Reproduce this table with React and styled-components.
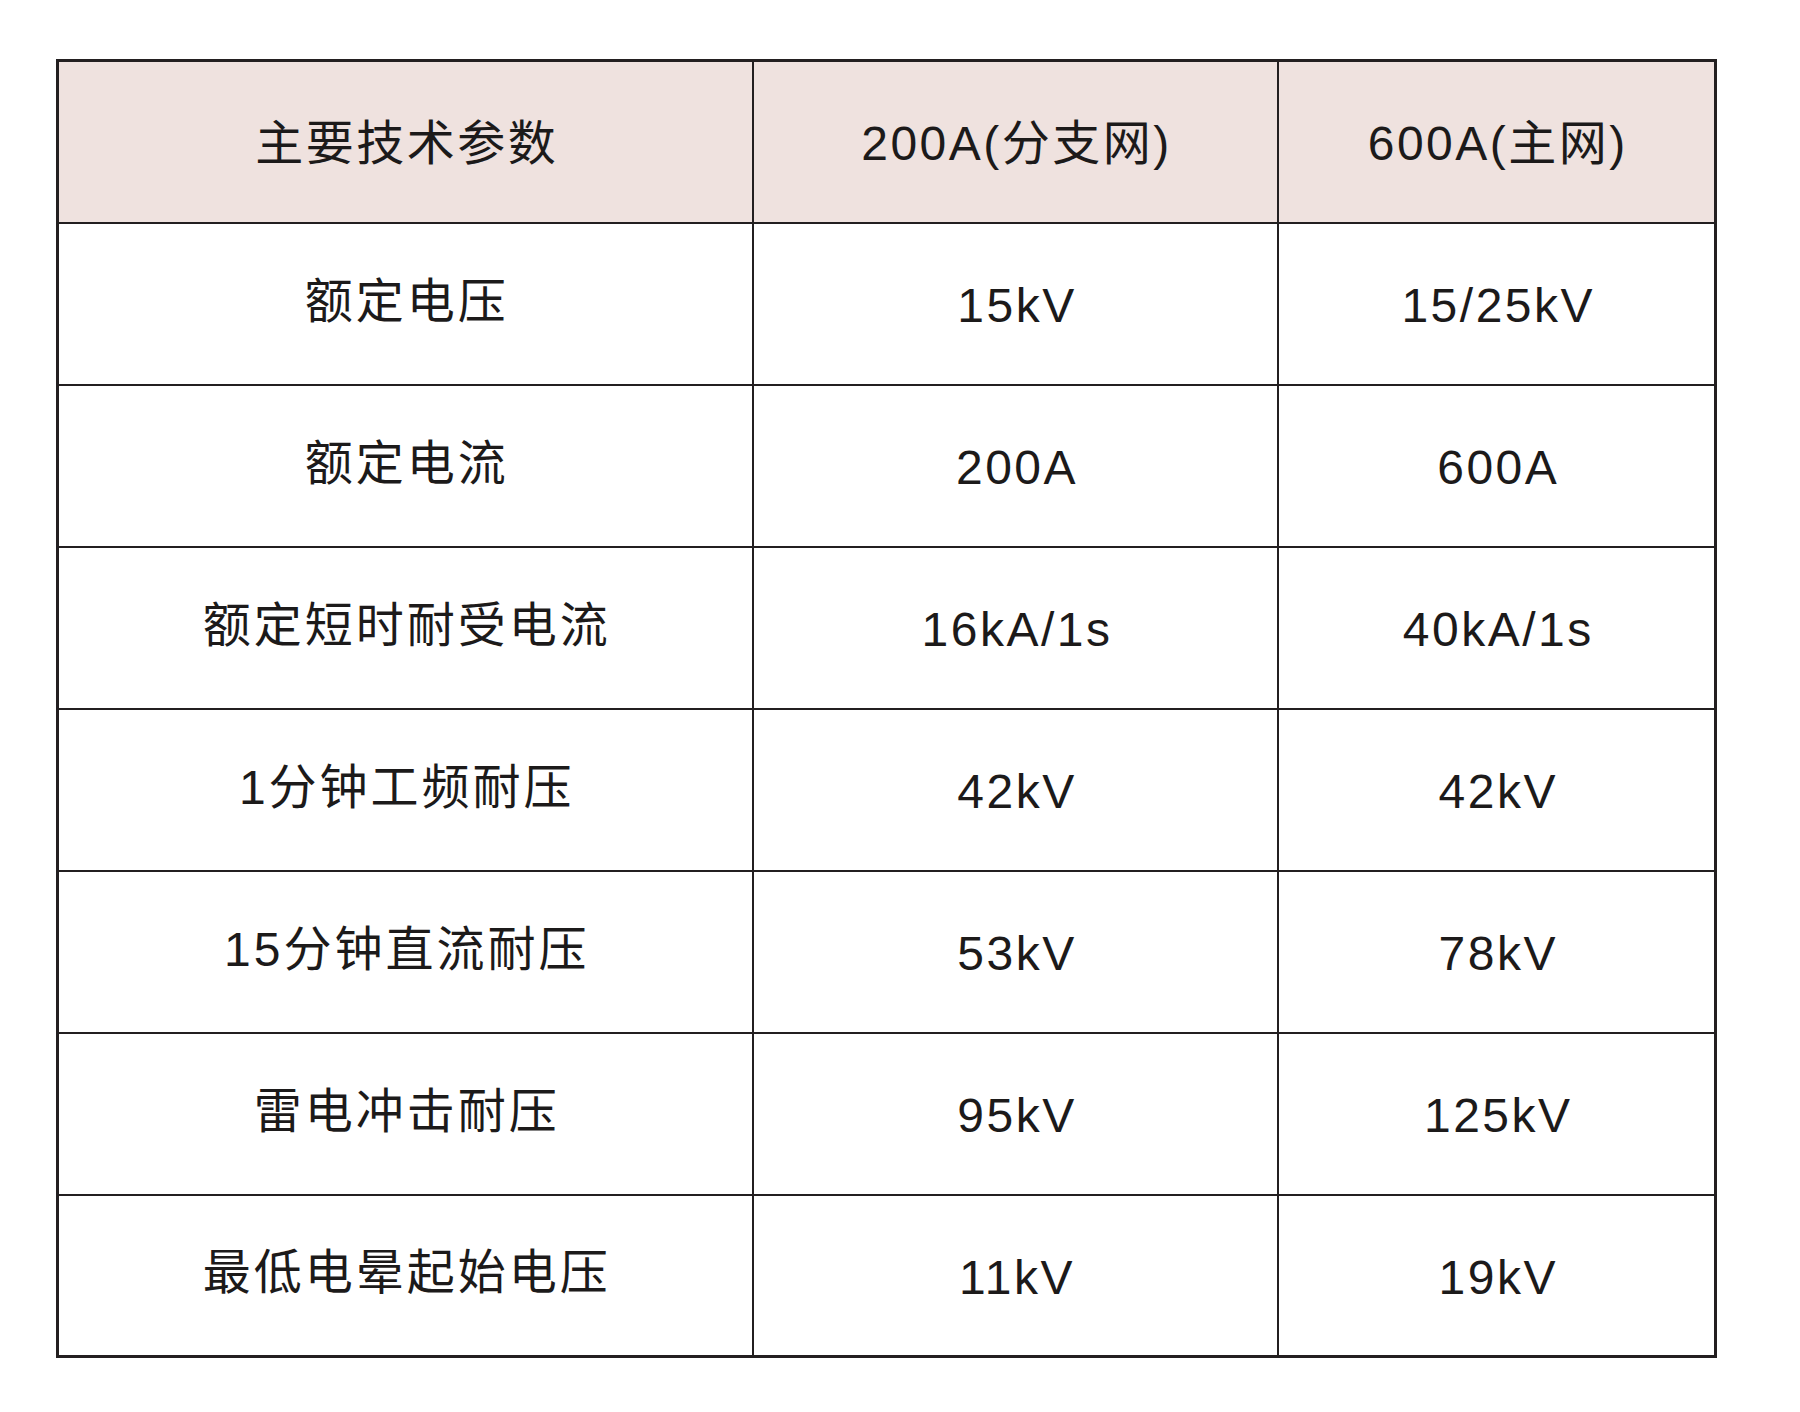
import styled, { createGlobalStyle } from "styled-components";

const rows = [
  ["额定电压", "15kV", "15/25kV"],
  ["额定电流", "200A", "600A"],
  ["额定短时耐受电流", "16kA/1s", "40kA/1s"],
  ["1分钟工频耐压", "42kV", "42kV"],
  ["15分钟直流耐压", "53kV", "78kV"],
  ["雷电冲击耐压", "95kV", "125kV"],
  ["最低电晕起始电压", "11kV", "19kV"],
];

export default function App() {
  return (
    <>
      <GlobalStyle />
      <Page>
        <SpecTable>
          <colgroup>
            <col style={{ width: 695 }} />
            <col style={{ width: 525 }} />
            <col style={{ width: 438 }} />
          </colgroup>
          <thead>
            <tr>
              <HeadCell>主要技术参数</HeadCell>
              <HeadCell>200A(分支网)</HeadCell>
              <HeadCell>600A(主网)</HeadCell>
            </tr>
          </thead>
          <tbody>
            {rows.map((row) => (
              <tr key={row[0]}>
                {row.map((value, i) => (
                  <Cell key={i} $label={i === 0}>
                    {value}
                  </Cell>
                ))}
              </tr>
            ))}
          </tbody>
        </SpecTable>
      </Page>
    </>
  );
}

const GlobalStyle = createGlobalStyle`
  html, body {
    margin: 0;
    padding: 0;
    background: #ffffff;
  }
`;

const Page = styled.div`
  width: 1800px;
  height: 1412px;
  padding: 59px 0 0 56px;
  box-sizing: border-box;
  background: #ffffff;
  font-family: "Liberation Sans", "Noto Sans CJK SC", sans-serif;
  color: #1c1a1a;
`;

const SpecTable = styled.table`
  width: 1658px;
  table-layout: fixed;
  border-collapse: collapse;
  border: 3px solid #231f20;

  tr {
    height: 162px;
  }
`;

const Cell = styled.td`
  border: 2px solid #231f20;
  padding: ${(p) => (p.$label ? "0 0 14px 3px" : "4px 0 0 4px")};
  text-align: center;
  vertical-align: middle;
  font-size: 48px;
  letter-spacing: ${(p) => (p.$label ? "3px" : "2.5px")};
  font-weight: 400;
`;

const HeadCell = styled.th`
  border: 2px solid #231f20;
  padding: 0 0 6px 3px;
  text-align: center;
  vertical-align: middle;
  background: #efe2df;
  font-size: 48px;
  letter-spacing: 2.5px;
  font-weight: 400;
`;
